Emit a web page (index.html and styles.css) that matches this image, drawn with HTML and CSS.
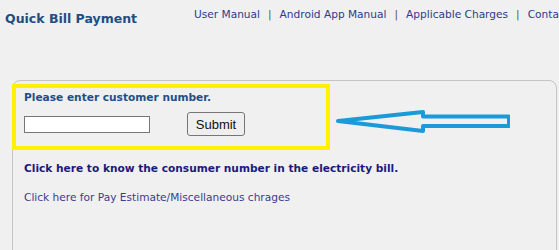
FILE: index.html
```html
<!DOCTYPE html>
<html>
<head>
<meta charset="utf-8">
<link rel="stylesheet" href="styles.css">
</head>
<body>
<div class="header">
  <h1 class="title">Quick Bill Payment</h1>
  <nav class="nav">
    <a href="#">User Manual</a><span class="sep">|</span><a href="#">Android App Manual</a><span class="sep">|</span><a href="#">Applicable Charges</a><span class="sep">|</span><a href="#">Contact Us</a>
  </nav>
</div>
<div class="panel">
  <div class="highlight">
    <div class="prompt">Please enter customer number.</div>
    <div class="form-row">
      <input class="cust-input" type="text">
      <button class="submit">Submit</button>
    </div>
  </div>
  <svg class="arrow" width="180" height="30" viewBox="330 106 180 30">
    <polygon points="338,121 423,112 423,116.5 509,116.5 509,126 423,126 423,131" fill="none" stroke="#1a9ad8" stroke-width="4" stroke-linejoin="round"/>
  </svg>
  <a class="know-link" href="#">Click here to know the consumer number in the electricity bill.</a>
  <a class="pay-link" href="#">Click here for Pay Estimate/Miscellaneous chrages</a>
</div>
</body>
</html>
```
FILE: styles.css
```css
html, body {
  margin: 0;
  padding: 0;
  background: #f0f0f0;
  font-family: "DejaVu Sans", Verdana, sans-serif;
  width: 559px;
  height: 250px;
  overflow: hidden;
}
.header {
  display: flex;
  align-items: flex-start;
  height: 80px;
}
.title {
  flex-shrink: 0;
  margin: 11px 0 0 5px;
  font-size: 12.5px;
  font-weight: bold;
  color: #1f4e82;
  width: 189px;
  white-space: nowrap;
}
.nav {
  flex-shrink: 0;
  margin-top: 8px;
  font-size: 10.6px;
  white-space: nowrap;
  color: #2f3a8c;
}
.nav a {
  color: #2f3a8c;
  text-decoration: none;
}
.sep {
  color: #555;
  margin: 0 8px;
}
.panel {
  position: relative;
  margin-left: 12px;
  width: 543px;
  height: 180px;
  border: 1px solid #c4c4c4;
  border-radius: 8px;
}
.highlight {
  margin: 3px 0 0 -1px;
  width: 302px;
  height: 58px;
  border: 4px solid #fff200;
  padding: 0 0 0 8px;
}
.prompt {
  margin-top: 3px;
  font-size: 10.6px;
  font-weight: bold;
  color: #1d4f8b;
}
.form-row {
  display: flex;
  align-items: center;
  margin-top: 9px;
}
.cust-input {
  box-sizing: border-box;
  width: 126px;
  height: 17px;
  padding: 1px;
  border: 1px solid #767676;
  background: #fff;
  margin: 0;
}
.submit {
  margin-left: 37px;
  width: 58px;
  height: 24px;
  font-family: "Liberation Sans", Arial, sans-serif;
  font-size: 13px;
  color: #111;
  background: #efefef;
  border: 1px solid #767676;
  border-radius: 3px;
  padding: 0;
}
.arrow {
  position: absolute;
  left: 317px;
  top: 25px;
}
.know-link {
  display: block;
  margin: 12px 0 0 11px;
  font-size: 10.6px;
  font-weight: bold;
  color: #1a1a7e;
  text-decoration: none;
}
.pay-link {
  display: block;
  margin: 17px 0 0 11px;
  font-size: 10.6px;
  color: #3b3b90;
  text-decoration: none;
}
```
